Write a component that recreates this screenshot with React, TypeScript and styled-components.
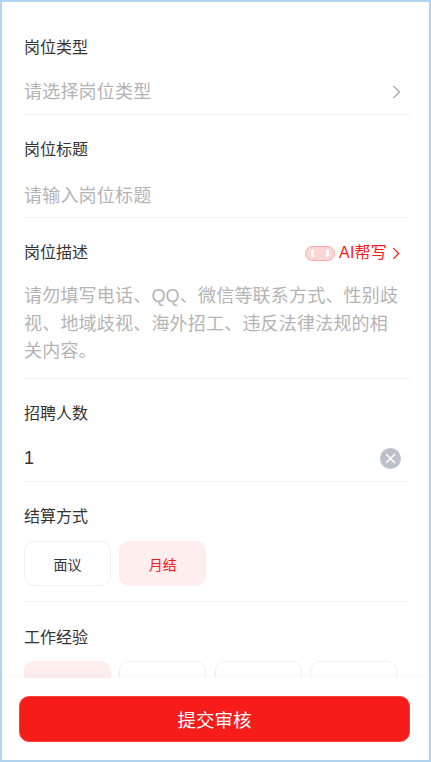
import React from 'react';
import styled, { createGlobalStyle } from 'styled-components';

const GlobalStyle = createGlobalStyle`
  html, body {
    margin: 0;
    padding: 0;
    background: #fff;
  }
  * {
    box-sizing: border-box;
  }
`;

const Page = styled.div`
  position: relative;
  width: 431px;
  height: 762px;
  overflow: hidden;
  border: 2px solid #b3d4ee;
  background: #fff;
  font-family: "Liberation Sans", "Noto Sans CJK SC", sans-serif;
`;

const Form = styled.div`
  display: flex;
  flex-direction: column;
  padding: 0 19px 0 22px;
`;

const Section = styled.div<{ $height: number; $last?: boolean }>`
  height: ${(p) => p.$height}px;
  border-bottom: ${(p) => (p.$last ? 'none' : '1px solid #f3f3f3')};
`;

const LabelRow = styled.div<{ $top: number }>`
  display: flex;
  align-items: center;
  justify-content: space-between;
  height: 24px;
  margin-top: ${(p) => p.$top}px;
  padding-right: 10px;
`;

const Label = styled.div`
  font-size: 16px;
  line-height: 24px;
  color: #333;
`;

const ValueRow = styled.div<{ $top: number }>`
  display: flex;
  align-items: center;
  justify-content: space-between;
  height: 28px;
  margin-top: ${(p) => p.$top}px;
  padding-right: 9px;
`;

const Placeholder = styled.div`
  font-size: 18px;
  line-height: 28px;
  letter-spacing: 0.2px;
  color: #b4b4b4;
`;

const Value = styled.div`
  font-size: 18px;
  line-height: 28px;
  color: #333;
`;

const Description = styled.div`
  margin-top: 18px;
  padding-right: 8px;
  font-size: 18px;
  line-height: 27.5px;
  letter-spacing: 0.2px;
  color: #b4b4b4;
`;

const AiHelp = styled.div`
  display: flex;
  align-items: center;
  font-size: 16px;
  line-height: 24px;
  letter-spacing: 0.2px;
  color: #f61c1a;
`;

const AiBadge = styled.span`
  display: flex;
  align-items: center;
  justify-content: space-between;
  width: 30px;
  height: 15px;
  margin-right: 4px;
  padding: 0 5px;
  border: 1px solid #fba9ab;
  border-radius: 8px;
  background: #ffd6d6;
`;

const AiDot = styled.span`
  width: 3px;
  height: 8px;
  border-radius: 2px;
  background: #fff;
`;

const ChevronBox = styled.span<{ $color: string; $left: number }>`
  display: flex;
  margin-left: ${(p) => p.$left}px;
  color: ${(p) => p.$color};
`;

const ClearButton = styled.span`
  display: flex;
  align-items: center;
  justify-content: center;
  width: 21px;
  height: 21px;
  border-radius: 50%;
  background: #bcc0cb;
`;

const ChipRow = styled.div<{ $top: number }>`
  display: flex;
  gap: 8.3px;
  margin-top: ${(p) => p.$top}px;
`;

const Chip = styled.div<{ $active?: boolean }>`
  display: flex;
  align-items: center;
  justify-content: center;
  width: 87px;
  height: 45px;
  border-radius: 10px;
  border: 1px solid ${(p) => (p.$active ? '#feeeee' : '#f0f0f0')};
  background: ${(p) => (p.$active ? '#feeeee' : '#fff')};
  color: ${(p) => (p.$active ? '#f61c1a' : '#333')};
  font-size: 14px;
`;

const BottomBar = styled.div`
  position: absolute;
  left: 0;
  right: 0;
  bottom: 0;
  height: 82px;
  padding: 18px 19px 0 17px;
  background: #fff;
  box-shadow: 0 -4px 8px rgba(0, 0, 0, 0.025);
`;

const SubmitButton = styled.button`
  display: block;
  width: 100%;
  height: 46px;
  padding: 0;
  border: 1px solid #f8403e;
  border-radius: 10px;
  background: #f61c1a;
  color: #fff;
  font-family: inherit;
  font-size: 18.5px;
`;

function Chevron({ color, left, width, height }: { color: string; left: number; width: number; height: number }) {
  return (
    <ChevronBox $color={color} $left={left}>
      <svg width={width} height={height} viewBox="0 0 9 14" fill="none" stroke="currentColor" strokeWidth="1.4">
        <path d="M1.5 1l6 6-6 6" />
      </svg>
    </ChevronBox>
  );
}

export default function App() {
  return (
    <Page>
      <GlobalStyle />
      <Form>
        <Section $height={113}>
          <LabelRow $top={34}>
            <Label>岗位类型</Label>
          </LabelRow>
          <ValueRow $top={18}>
            <Placeholder>请选择岗位类型</Placeholder>
            <Chevron color="#a9a9a9" left={0} width={9} height={14} />
          </ValueRow>
        </Section>
        <Section $height={103}>
          <LabelRow $top={23}>
            <Label>岗位标题</Label>
          </LabelRow>
          <ValueRow $top={20}>
            <Placeholder>请输入岗位标题</Placeholder>
          </ValueRow>
        </Section>
        <Section $height={161}>
          <LabelRow $top={23}>
            <Label>岗位描述</Label>
            <AiHelp>
              <AiBadge>
                <AiDot />
                <AiDot />
              </AiBadge>
              AI帮写
              <Chevron color="#f61c1a" left={5} width={8} height={13} />
            </AiHelp>
          </LabelRow>
          <Description>
            请勿填写电话、QQ、微信等联系方式、性别歧视、地域歧视、海外招工、违反法律法规的相关内容。
          </Description>
        </Section>
        <Section $height={103}>
          <LabelRow $top={23}>
            <Label>招聘人数</Label>
          </LabelRow>
          <ValueRow $top={18}>
            <Value>1</Value>
            <ClearButton>
              <svg width="11" height="11" viewBox="0 0 11 11" stroke="#fff" strokeWidth="1.5">
                <path d="M1 1l9 9M10 1l-9 9" />
              </svg>
            </ClearButton>
          </ValueRow>
        </Section>
        <Section $height={120}>
          <LabelRow $top={23}>
            <Label>结算方式</Label>
          </LabelRow>
          <ChipRow $top={12}>
            <Chip>面议</Chip>
            <Chip $active>月结</Chip>
          </ChipRow>
        </Section>
        <Section $height={160} $last>
          <LabelRow $top={24}>
            <Label>工作经验</Label>
          </LabelRow>
          <ChipRow $top={11}>
            <Chip $active>不限</Chip>
            <Chip>1年以内</Chip>
            <Chip>1-3年</Chip>
            <Chip>3-5年</Chip>
          </ChipRow>
        </Section>
      </Form>
      <BottomBar>
        <SubmitButton>提交审核</SubmitButton>
      </BottomBar>
    </Page>
  );
}
